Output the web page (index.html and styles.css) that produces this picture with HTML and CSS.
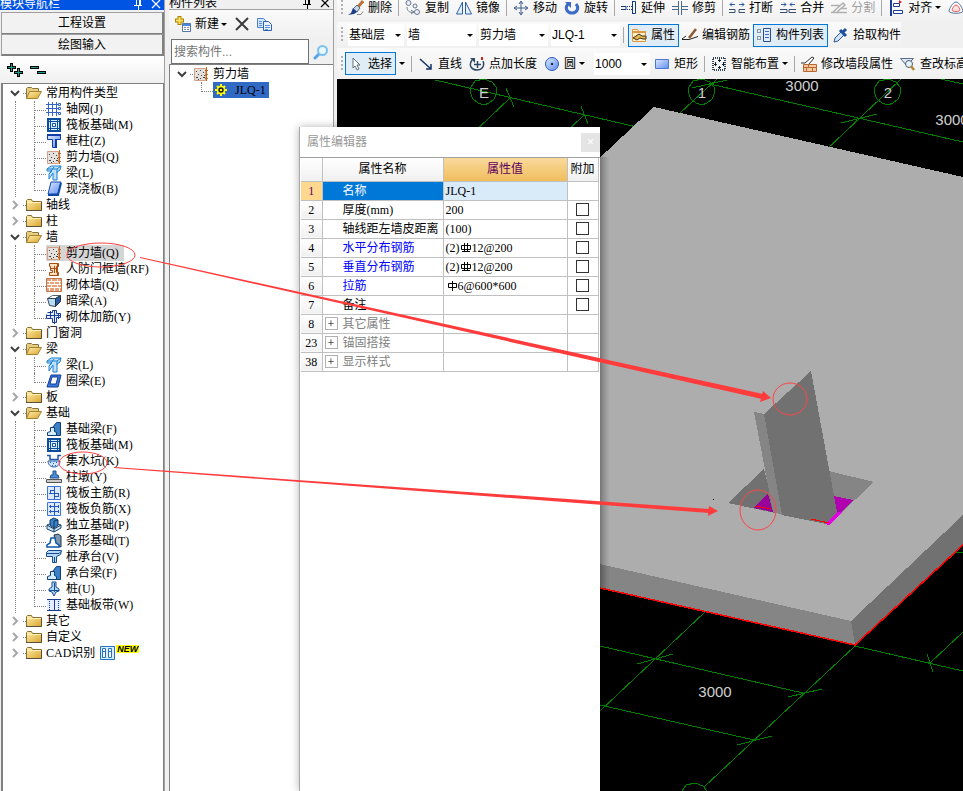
FILE: index.html
```html
<!DOCTYPE html>
<html lang="zh-CN">
<head>
    <meta charset="UTF-8">
    <meta name="viewport" content="width=device-width, initial-scale=1.0">
    <title>模块导航栏</title>
    <link rel="stylesheet" href="styles.css">
</head>
<body>
    <svg class="defs" aria-hidden="true">
        <defs>
            <linearGradient id="gold" x1="0" y1="0" x2="1" y2="1"><stop offset="0" stop-color="#fff0b0"/><stop offset="1" stop-color="#d9a52c"/></linearGradient>
            <linearGradient id="blue" x1="0" y1="0" x2="1" y2="1"><stop offset="0" stop-color="#dce9ff"/><stop offset="1" stop-color="#5f8df0"/></linearGradient>
            <linearGradient id="edge" x1="0" y1="0" x2="1" y2="0"><stop offset="0" stop-color="#000" stop-opacity=".2"/><stop offset="1" stop-color="#000" stop-opacity="0"/></linearGradient>
        </defs>
        <!-- tree -->
        <symbol id="down" viewBox="0 0 16 16"><path d="M4 6l4 4 4-4" fill="none" stroke="#404040" stroke-width="2"/></symbol>
        <symbol id="right" viewBox="0 0 16 16"><path d="M6 4l4 4-4 4" fill="none" stroke="#a6a6a6" stroke-width="2"/></symbol>
        <symbol id="folder" viewBox="0 0 16 16"><path d="M0.500 13.500V3.500l1-1h4l1 2h9v9z" fill="url(#gold)" stroke="#8a7030"/><path d="M1 5.500h14" stroke="#fff0b8"/><path d="M0 13.500h15.500V5" fill="none" stroke="#5a5040"/></symbol>
        <symbol id="open" viewBox="0 0 16 16"><path d="M0.500 13.500V3.500l1-1h4l1 1h6v3" fill="#e8cf80" stroke="#8a7540"/><path d="M0.500 13.500l3-7h12l-4 7z" fill="url(#gold)" stroke="#a8802c"/></symbol>
        <symbol id="grid" viewBox="0 0 16 16"><path d="M2.500 1v14M6.500 1v14M10.500 1v14M0 3.500h13M0 7.500h13M0 11.500h13" stroke="#3565c8"/><path d="M12.500 2.500h2v2h-2zM12.500 6.500h2v2h-2zM12.500 11.500h2v2h-2z" fill="#fff" stroke="#3565c8"/></symbol>
        <symbol id="raft" viewBox="0 0 16 16"><path d="M2 2h12v12H2z" fill="#d8ecff" stroke="#0c4e9c" stroke-width="2"/><path d="M4.500 1v14M11.500 1v14M1 4.500h14M1 11.500h14" stroke="#0c4e9c"/><path d="M6.500 6.500h3v3h-3z" fill="#fff" stroke="#0c4e9c"/></symbol>
        <symbol id="column" viewBox="0 0 16 16"><path d="M1.500 2.500h13v4h-4v8h-4v-8h-5z" fill="url(#blue)" stroke="#103ca8"/><path d="M1 2h14M10 6v9" stroke="#103ca8" stroke-width="2"/></symbol>
        <symbol id="wall" viewBox="0 0 16 16"><path d="M1.500 2.500h11v12h-11z" fill="#e4e0dc" stroke="#d6a088"/><path d="M3 5.500h1M7 4.500h1M10 6.500h1M5 8.500h1M8 9.500h1M3 11.500h2M7 12.500h1M10 11.500h2M11 9.500h1M5 13.500h1" stroke="#444"/><path d="M13.500 1v14M12 4.500h3M12 8.500h3M12 12.500h3" stroke="#c06820"/></symbol>
        <symbol id="beam" viewBox="0 0 16 16"><path d="M1 4l4-3h10l-1 4-3 2v8H7V8l-4 6V9l3-3H1z" fill="#bfe0fa" stroke="#1c80d0"/><path d="M1 4h10l4-3M11 4v4M3 9l5-7" fill="none" stroke="#1c80d0"/></symbol>
        <symbol id="slab" viewBox="0 0 16 16"><path d="M5 1h10l-3 12H2z" fill="url(#blue)" stroke="#1048a8"/><path d="M2 14h10l3-12" fill="none" stroke="#1048a8" stroke-width="2"/></symbol>
        <symbol id="frame" viewBox="0 0 16 16"><path d="M3.500 2.500h9v3h-2v6h2v3h-9v-3h3v-2h-2v-4h-1z" fill="#fce0c0" stroke="#a84c10"/><path d="M8.500 5v7M4 7.500h7M11.500 3v11" stroke="#a84c10"/></symbol>
        <symbol id="brick" viewBox="0 0 16 16"><path d="M1 1h14v14H1z" fill="#e8a078"/><path d="M1 4.500h14M1 7.500h14M1 10.500h14M5.500 2v3M11.500 2v3M3.500 5v3M8.500 5v3M13.500 5v3M5.500 8v3M11.500 8v3M3.500 11v3M8.500 11v3M13.500 11v3" stroke="#fff"/><path d="M0.500 1.500h15v13H.5z" fill="none" stroke="#c07448"/></symbol>
        <symbol id="hidden" viewBox="0 0 16 16"><path d="M1.500 5.500l5-3h8l-5 3z" fill="#fff" stroke="#5a6470"/><path d="M1.500 5.500h8v8l-6-1z" fill="#b8dcf4" stroke="#345"/><path d="M9.500 5.500l5-3v6l-5 5z" fill="#2c5c9c" stroke="#234"/></symbol>
        <symbol id="rebar" viewBox="0 0 16 16"><path d="M1.500 3.500h5v-2h4v3h4v4h-4v5h-4v-4h-6v-4" fill="#e4eeff" stroke="#183c98"/><path d="M1 6.500h14M4.500 2v8M8.500 2v13M12.500 4v6" stroke="#183c98"/></symbol>
        <symbol id="ring" viewBox="0 0 16 16"><path d="M5 2h10l-3 12H1z" fill="#3c78dc" stroke="#103c98"/><path d="M6 4h6l-2 7H4z" fill="#fff" stroke="#103c98"/></symbol>
        <symbol id="strip" viewBox="0 0 16 16"><path d="M6.500 6.500l4-5h4v13h-5z" fill="#3a80c4" stroke="#103c78"/><path d="M1.500 14.500v-3l3-1v-4h4v4l2 1v3z" fill="#d0ecff" stroke="#103c78"/></symbol>
        <symbol id="trap" viewBox="0 0 16 16"><path d="M8 2l4-1 3 2v11l-5-2z" fill="#7c98b0" stroke="#234"/><path d="M1 14v-2l3-2 1-5h4l1 5 3 2v2z" fill="#fff" stroke="#0c58a8" stroke-width="1.500"/></symbol>
        <symbol id="sump" viewBox="0 0 16 16"><path d="M2 8h12c0 8-12 8-12 0z" fill="#cfe4ff" stroke="#2458a8"/><path d="M1 2.500h3v4h8v-4h3" fill="none" stroke="#2458a8" stroke-width="1.500"/><path d="M4 9.500h1M7 10.500h1M10 9.500h1M6 12.500h1M9 12.500h1" stroke="#2458a8"/></symbol>
        <symbol id="pier" viewBox="0 0 16 16"><path d="M7 2h3v4h2l1 3H4l1-3h2z" fill="#4c90dc" stroke="#204c90"/><path d="M0.500 10.500h15v3H.5z" fill="#ccc" stroke="#555"/></symbol>
        <symbol id="main" viewBox="0 0 16 16"><path d="M1.500 1.500h13v13h-13z" fill="#dceaff" stroke="#3c74d4"/><path d="M3 8.500h10M8.500 2v12M4.500 5v4M12.500 8v4M4 5.500h4M9 11.500h4" stroke="#2458c0" fill="none"/></symbol>
        <symbol id="neg" viewBox="0 0 16 16"><path d="M1.500 1.500h13v13h-13z" fill="#dceaff" stroke="#3c74d4"/><path d="M3 5.500h10M3 10.500h10M8.500 2v12M4.500 4v3M12.500 9v3M4.500 9v3M12.500 4v3" stroke="#2458c0"/></symbol>
        <symbol id="iso" viewBox="0 0 16 16"><path d="M1 8l5-2 9 2v3l-7 4-7-3z" fill="#c8e0f4" stroke="#204870"/><path d="M4 3l4-2 4 2v5L8 11 4 8z" fill="#3c80c8" stroke="#103860"/><path d="M8 11V4l4-1M1 8l7 4 7-4M8 12v3" fill="none" stroke="#103860"/></symbol>
        <symbol id="cap" viewBox="0 0 16 16"><path d="M0.500 3.500l2-2h13l-1 4-4 2v6h-4v-6h-6z" fill="#b4d8f8" stroke="#184c88"/><path d="M1 4.500h12l2-2M8.500 8v6" stroke="#184c88" fill="none"/></symbol>
        <symbol id="pile" viewBox="0 0 16 16"><path d="M6 1h4v5l3 2v2l-3 1-2 4-2-4-3-1V8l3-2z" fill="#b4d8f8" stroke="#184c98"/><path d="M8.500 2v9M3 9.500h10" stroke="#184c98"/></symbol>
        <symbol id="band" viewBox="0 0 16 16"><path d="M1 3h14v10H1z" fill="#e4eeff"/><path d="M1 2.500h14M1 13.500h14M8.500 3v10" stroke="#1c3c90"/><path d="M3.500 4v9M12.500 4v9" stroke="#1c3c90" stroke-dasharray="1 1"/></symbol>
        <symbol id="cad" viewBox="0 0 16 16"><path d="M1.500 1.500h14v13h-14z" fill="#d8eeff" stroke="#2474c4"/><path d="M3.500 3.500h3v9h-3zM9.500 3.500h3v9h-3zM3 6.500h4M9 6.500h4" fill="#fff" stroke="#2474c4"/></symbol>
        <symbol id="gear" viewBox="0 0 16 16"><path d="M8 2v12M2 8h12M4 4l8 8M12 4l-8 8" stroke="#ff0" stroke-width="2"/><circle cx="8" cy="8" r="3.500" fill="#222" stroke="#ff0" stroke-width="1.500"/><path d="M7 7h2v2H7z" fill="#ff0"/></symbol>
        <!-- tools -->
        <symbol id="plus" viewBox="0 0 16 16"><path d="M4.500 1v9M0 5.500h9M11.500 6v9M7 10.500h9" stroke="#000" stroke-width="3"/><path d="M4.500 2v7M1 5.500h7M11.500 7v7M8 10.500h7" stroke="#1c9c8c"/></symbol>
        <symbol id="minus" viewBox="0 0 16 16"><path d="M0 5.500h9M7 10.500h9" stroke="#000" stroke-width="3"/><path d="M1 5.500h7M8 10.500h7" stroke="#1c9c8c"/></symbol>
        <symbol id="pin" viewBox="0 0 16 16"><path d="M5 3.500h6M6.500 4v5M9.500 4v5M10.500 4v5M4 9.500h8M8.500 10v4" stroke="currentColor" fill="none"/></symbol>
        <symbol id="close" viewBox="0 0 16 16"><path d="M4 4l8 8M12 4l-8 8" stroke="currentColor" stroke-width="1.200"/></symbol>
        <symbol id="new" viewBox="0 0 16 16"><path d="M4.500 0v9M0 4.500h9" stroke="#a88400" stroke-width="4"/><path d="M4.500 1v7M1 4.500h7" stroke="#ffe060" stroke-width="2"/><path d="M7.500 7.500h8v8h-8z" fill="#fff" stroke="#5078a8"/><path d="M8 9h7" stroke="#4888e0" stroke-width="2"/><path d="M9 11.500h2M12 11.500h2M9 13.500h2M12 13.500h2" stroke="#88a"/></symbol>
        <symbol id="cross" viewBox="0 0 16 16"><path d="M2 2l12 12M14 2L2 14" stroke="#3c3c3c" stroke-width="2"/></symbol>
        <symbol id="pages" viewBox="0 0 16 16"><path d="M0.500 2.500h6l3 3v6h-9z" fill="#d4e6ff" stroke="#4c80cc"/><path d="M6.500 5.500h5l3 3v6h-8z" fill="#e8f2ff" stroke="#2c60b4"/><path d="M2 5.500h3M2 7.500h3M2 9.500h3M8 9.500h5M8 11.500h5M8 13.500h3" stroke="#5c90dc"/></symbol>
        <symbol id="search" viewBox="0 0 16 16"><path d="M6 10l-4 4" stroke="#58a4ec" stroke-width="3" stroke-linecap="round"/><circle cx="9.500" cy="6.500" r="4.500" fill="#e8f8ff" stroke="#7cc0f0" stroke-width="2"/></symbol>
        <symbol id="brush" viewBox="0 0 16 16"><path d="M15 1l-5 6" stroke="#c0703c" stroke-width="3"/><path d="M9 5l3 3-3 4-4-3z" fill="#c8d4e8" stroke="#567"/><path d="M5 8l4 4-3 2-6 1 3-2z" fill="#1c3c88"/><path d="M9 14.500h4l2-3" stroke="#888" fill="none"/></symbol>
        <symbol id="copy" viewBox="0 0 16 16"><circle cx="3.500" cy="3" r="2.500" fill="#eef" stroke="#68788c"/><circle cx="10" cy="6" r="2" fill="#eef" stroke="#68788c"/><circle cx="12" cy="12" r="2.500" fill="#eef" stroke="#68788c"/><path d="M2 7c0 4 3 6 6 5M6 10l3 2-3 2" fill="none" stroke="#68788c"/></symbol>
        <symbol id="mirror" viewBox="0 0 16 16"><path d="M6.500 2v12h-6zM9.500 2v12h6z" fill="#e4f0ff" stroke="#2c5cac"/></symbol>
        <symbol id="move" viewBox="0 0 16 16"><path d="M8 2v12M2 8h12M6 4l2-3 2 3M6 12l2 3 2-3M4 6L1 8l3 2M12 6l3 2-3 2" fill="none" stroke="#3c5c88"/></symbol>
        <symbol id="rotate" viewBox="0 0 16 16"><path d="M4 4c-4 5 0 9 4 9s8-4 4-9" fill="none" stroke="#3c6cc8" stroke-width="3"/><path d="M1 2h6v6z" fill="#3c6cc8"/></symbol>
        <symbol id="extend" viewBox="0 0 16 16"><path d="M0 6.500h5v3H0M11 1.500h3.500v12H11M11.500 2v12" stroke="#183c80" fill="none"/><path d="M6 6.500h5M6 9.500h5" stroke="#183c80" stroke-dasharray="1 1"/></symbol>
        <symbol id="trim" viewBox="0 0 16 16"><path d="M6.500 1v14M9.500 1v14M0 6.500h6M0 9.500h6M10 6.500h6M10 9.500h6" stroke="#486890" fill="none"/></symbol>
        <symbol id="break" viewBox="0 0 16 16"><path d="M6 4.500H1l2-2M1 4.500l2 2M10 4.500h5l-2-2M15 4.500l-2 2" fill="none" stroke="#2c58a4"/><path d="M0 9.500h6v3H0M16 9.500h-6v3h6" fill="none" stroke="#38506c"/></symbol>
        <symbol id="merge" viewBox="0 0 16 16"><path d="M1 4.500h5l-2-2M6 4.500l-2 2M15 4.500h-5l2-2M10 4.500l2 2" fill="none" stroke="#2c58a4"/><path d="M0 9.500h7v3H0M16 9.500H9v3h7" fill="none" stroke="#38506c"/></symbol>
        <symbol id="split" viewBox="0 0 16 16"><path d="M0 5.500h9M0 12.500h16M2 12l10-9 2 2-8 7M10 8.500h6" fill="none" stroke="#b0b0b0" stroke-width="1.500"/></symbol>
        <symbol id="align" viewBox="0 0 16 16"><path d="M3 0v16" stroke="#1c3c98" stroke-width="2"/><path d="M5.500 3.500h6v3h-6zM5.500 10.500h9v3h-9z" fill="#fff" stroke="#1c3c98"/><path d="M11 0l3 2-3 2" fill="#c22"/></symbol>
        <symbol id="tri" viewBox="0 0 16 16"><path d="M8 2c3 0 7 7 7 9 0 3-14 3-14 0 0-2 4-9 7-9z" fill="#fff" stroke="#507098"/><path d="M8 5c2 0 4 4 4 5 0 2-8 2-8 0 0-1 2-5 4-5z" fill="#ffe0e0" stroke="#e05c5c"/></symbol>
        <symbol id="props" viewBox="0 0 16 16"><path d="M1.500 2.500h5l1 2h7v10h-13z" fill="#fff2d0" stroke="#e09840"/><path d="M1 5h14" stroke="#e09840" stroke-width="2"/><path d="M2 11l6-4 3 2h4v3h-3l-3-1-3 2z" fill="#e0b850" stroke="#403018"/></symbol>
        <symbol id="edit" viewBox="0 0 16 16"><path d="M0 12.500h7l9-3M0 12l4-3" fill="none" stroke="#222"/><path d="M14 2L7 11" stroke="#905830" stroke-width="2.500"/></symbol>
        <symbol id="list" viewBox="0 0 16 16"><path d="M7.500 1.500h7v13h-7z" fill="#e0ecff" stroke="#2c4c88"/><path d="M9 4.500h4M9 7.500h4M9 10.500h4" stroke="#3c6cc0"/><path d="M1.500 2.500h3v3h-3zM1.500 9.500h3v3h-3z" fill="none" stroke="#345" stroke-dasharray="1 1"/></symbol>
        <symbol id="pick" viewBox="0 0 16 16"><path d="M1 15l1-4 6-6 3 3-6 6z" fill="#cfe4ff" stroke="#305888"/><path d="M7 3l6 6M9 6l4-4" stroke="#1c50a0" stroke-width="3"/></symbol>
        <symbol id="cursor" viewBox="0 0 16 16"><path d="M5 2v10l2-2 2 4 2-1-2-4h3z" fill="#fff" stroke="#607080"/></symbol>
        <symbol id="line" viewBox="0 0 16 16"><path d="M2 3l11 10M13 8v5H8" fill="none" stroke="#183468" stroke-width="1.500"/></symbol>
        <symbol id="length" viewBox="0 0 16 16"><path d="M3 4c-4 6 0 10 5 10s8-4 6-9M8.500 5v7M5 8.500h7" fill="none" stroke="#304868" stroke-width="1.500"/><path d="M1 2h5v5z" fill="#304868"/><path d="M13 1v3" stroke="#c22" stroke-width="2"/></symbol>
        <symbol id="circle" viewBox="0 0 16 16"><circle cx="8" cy="8" r="6.500" fill="url(#blue)" stroke="#2c58b8"/><path d="M7 7h2v2H7z" fill="#123"/></symbol>
        <symbol id="rect" viewBox="0 0 16 16"><path d="M1.500 3.500h13v9h-13z" fill="url(#blue)" stroke="#4c78d0"/></symbol>
        <symbol id="smart" viewBox="0 0 16 16"><path d="M2 2h12v12H2z" fill="none" stroke="#345" stroke-width="2" stroke-dasharray="1 1"/><path d="M8.500 3v3M7 4.500h3M8.500 10v3M7 11.500h3M4.500 6v4M3 8.500h3M12.500 6v4M11 8.500h3" stroke="#123"/></symbol>
        <symbol id="modify" viewBox="0 0 16 16"><path d="M2.500 8.500h13v7h-13z" fill="#f4c8a0" stroke="#b86830"/><path d="M2 11.500h13M7.500 8v3M11.500 11v4M5.500 11v4" stroke="#b86830"/><path d="M0 7h4l7-6 2 1-5 6" fill="#fff" stroke="#333"/></symbol>
        <symbol id="level" viewBox="0 0 16 16"><path d="M0.500 2.500h13l-3 3-4 4z" fill="#dce6f4" stroke="#58708c"/><circle cx="9" cy="8" r="3.500" fill="#e4f4ff" stroke="#506070"/><path d="M11 10l3 4" stroke="#b88830" stroke-width="2.500"/></symbol>
        <symbol id="hrb" viewBox="0 0 12 12"><path d="M1.500 3.500h9v4h-9zM4.500 1v9M7.500 1v9M2 9.500h8" fill="none" stroke="#000"/></symbol>
        <symbol id="hpb" viewBox="0 0 12 12"><path d="M2.500 3.500h8v4h-8zM6.500 1v10" fill="none" stroke="#000"/></symbol>
    </svg>

    <aside class="nav">
        <div class="title active"><span>模块导航栏</span><svg><use href="#pin"/></svg><svg><use href="#close"/></svg></div>
        <button class="tab">工程设置</button>
        <button class="tab">绘图输入</button>
        <div class="nav-tools">
            <button aria-label="展开"><svg><use href="#plus"/></svg></button>
            <button aria-label="折叠"><svg><use href="#minus"/></svg></button>
        </div>
        <ul class="tree">
            <li><div class="row"><button><svg><use href="#down"/></svg></button><a href="#"><svg><use href="#open"/></svg>常用构件类型</a></div>
                <ul>
                    <li><a href="#"><svg><use href="#grid"/></svg>轴网(J)</a></li>
                    <li><a href="#"><svg><use href="#raft"/></svg>筏板基础(M)</a></li>
                    <li><a href="#"><svg><use href="#column"/></svg>框柱(Z)</a></li>
                    <li><a href="#"><svg><use href="#wall"/></svg>剪力墙(Q)</a></li>
                    <li><a href="#"><svg><use href="#beam"/></svg>梁(L)</a></li>
                    <li><a href="#"><svg><use href="#slab"/></svg>现浇板(B)</a></li>
                </ul>
            </li>
            <li><div class="row"><button><svg><use href="#right"/></svg></button><a href="#"><svg><use href="#folder"/></svg>轴线</a></div></li>
            <li><div class="row"><button><svg><use href="#right"/></svg></button><a href="#"><svg><use href="#folder"/></svg>柱</a></div></li>
            <li><div class="row"><button><svg><use href="#down"/></svg></button><a href="#"><svg><use href="#open"/></svg>墙</a></div>
                <ul>
                    <li><a href="#" class="current"><svg><use href="#wall"/></svg>剪力墙(Q)</a></li>
                    <li><a href="#"><svg><use href="#frame"/></svg>人防门框墙(RF)</a></li>
                    <li><a href="#"><svg><use href="#brick"/></svg>砌体墙(Q)</a></li>
                    <li><a href="#"><svg><use href="#hidden"/></svg>暗梁(A)</a></li>
                    <li><a href="#"><svg><use href="#rebar"/></svg>砌体加筋(Y)</a></li>
                </ul>
            </li>
            <li><div class="row"><button><svg><use href="#right"/></svg></button><a href="#"><svg><use href="#folder"/></svg>门窗洞</a></div></li>
            <li><div class="row"><button><svg><use href="#down"/></svg></button><a href="#"><svg><use href="#open"/></svg>梁</a></div>
                <ul>
                    <li><a href="#"><svg><use href="#beam"/></svg>梁(L)</a></li>
                    <li><a href="#"><svg><use href="#ring"/></svg>圈梁(E)</a></li>
                </ul>
            </li>
            <li><div class="row"><button><svg><use href="#right"/></svg></button><a href="#"><svg><use href="#folder"/></svg>板</a></div></li>
            <li><div class="row"><button><svg><use href="#down"/></svg></button><a href="#"><svg><use href="#open"/></svg>基础</a></div>
                <ul>
                    <li><a href="#"><svg><use href="#strip"/></svg>基础梁(F)</a></li>
                    <li><a href="#"><svg><use href="#raft"/></svg>筏板基础(M)</a></li>
                    <li><a href="#"><svg><use href="#sump"/></svg>集水坑(K)</a></li>
                    <li><a href="#"><svg><use href="#pier"/></svg>柱墩(Y)</a></li>
                    <li><a href="#"><svg><use href="#main"/></svg>筏板主筋(R)</a></li>
                    <li><a href="#"><svg><use href="#neg"/></svg>筏板负筋(X)</a></li>
                    <li><a href="#"><svg><use href="#iso"/></svg>独立基础(P)</a></li>
                    <li><a href="#"><svg><use href="#trap"/></svg>条形基础(T)</a></li>
                    <li><a href="#"><svg><use href="#cap"/></svg>桩承台(V)</a></li>
                    <li><a href="#"><svg><use href="#strip"/></svg>承台梁(F)</a></li>
                    <li><a href="#"><svg><use href="#pile"/></svg>桩(U)</a></li>
                    <li><a href="#"><svg><use href="#band"/></svg>基础板带(W)</a></li>
                </ul>
            </li>
            <li><div class="row"><button><svg><use href="#right"/></svg></button><a href="#"><svg><use href="#folder"/></svg>其它</a></div></li>
            <li><div class="row"><button><svg><use href="#right"/></svg></button><a href="#"><svg><use href="#folder"/></svg>自定义</a></div></li>
            <li><div class="row"><button><svg><use href="#right"/></svg></button><a href="#"><svg><use href="#folder"/></svg>CAD识别<svg><use href="#cad"/></svg><b class="new">NEW</b></a></div></li>
        </ul>
    </aside>

    <aside class="parts">
        <div class="title"><span>构件列表</span><svg><use href="#pin"/></svg><svg><use href="#close"/></svg></div>
        <div class="parts-tools">
            <button><svg><use href="#new"/></svg>新建<i class="caret"></i></button>
            <button aria-label="删除"><svg><use href="#cross"/></svg></button>
            <button aria-label="复制"><svg><use href="#pages"/></svg></button>
        </div>
        <div class="search">
            <input type="text" placeholder="搜索构件..." aria-label="搜索构件">
            <button aria-label="搜索"><svg><use href="#search"/></svg></button>
        </div>
        <ul class="tree">
            <li><div class="row"><button><svg><use href="#down"/></svg></button><a href="#"><svg><use href="#wall"/></svg>剪力墙</a></div>
                <ul>
                    <li><a href="#" class="selected"><svg><use href="#gear"/></svg>JLQ-1</a></li>
                </ul>
            </li>
        </ul>
    </aside>

    <main>
        <div class="toolbars">
            <div class="bar bar-edit">
                <button><svg><use href="#brush"/></svg>删除</button><hr>
                <button><svg><use href="#copy"/></svg>复制</button>
                <button><svg><use href="#mirror"/></svg>镜像</button><hr>
                <button><svg><use href="#move"/></svg>移动</button>
                <button><svg><use href="#rotate"/></svg>旋转</button><hr>
                <button><svg><use href="#extend"/></svg>延伸</button>
                <button><svg><use href="#trim"/></svg>修剪</button><hr>
                <button><svg><use href="#break"/></svg>打断</button>
                <button><svg><use href="#merge"/></svg>合并</button>
                <button disabled><svg><use href="#split"/></svg>分割</button><hr>
                <button><svg><use href="#align"/></svg>对齐<i class="caret"></i></button>
                <button aria-label="偏移"><svg><use href="#tri"/></svg></button>
            </div>
            <div class="bar bar-part">
                <span class="combo short"><select aria-label="楼层"><option>基础层</option></select></span>
                <span class="combo"><select aria-label="类型"><option>墙</option></select></span>
                <span class="combo"><select aria-label="构件类型"><option>剪力墙</option></select></span>
                <span class="combo"><select aria-label="构件"><option>JLQ-1</option></select></span>
                <hr>
                <button class="on"><svg><use href="#props"/></svg>属性</button>
                <button><svg><use href="#edit"/></svg>编辑钢筋</button>
                <button class="on"><svg><use href="#list"/></svg>构件列表</button>
                <button><svg><use href="#pick"/></svg>拾取构件</button>
            </div>
            <div class="bar bar-draw">
                <button class="on"><svg><use href="#cursor"/></svg>选择</button><i class="caret"></i><hr>
                <button><svg><use href="#line"/></svg>直线</button>
                <button><svg><use href="#length"/></svg>点加长度</button>
                <button><svg><use href="#circle"/></svg>圆<i class="caret"></i></button>
                <span class="combo short"><select aria-label="半径"><option>1000</option></select></span>
                <button><svg><use href="#rect"/></svg>矩形</button><hr>
                <button><svg><use href="#smart"/></svg>智能布置<i class="caret"></i></button><hr>
                <button><svg><use href="#modify"/></svg>修改墙段属性</button>
                <button><svg><use href="#level"/></svg>查改标高</button>
            </div>
        </div>
        <svg class="scene" role="img" aria-label="三维视图">
            <g transform="translate(-337 -79)" shape-rendering="crispEdges">
                <!-- axis grid -->
                <g fill="none" stroke="#008000">
                    <path d="M435 80L654 131M510 98L470 136M506 88l8 19M584 115L560 138M581 106l7 18"/>
                    <path d="M717 79L680 113M692 88L727 80M710 84L963 142M841 123L877 114M901 79L825 151M941 79L963 84"/>
                    <path d="M600 646L803 693M637 664l36-10M788 697l34-8M600 705L754 740M737 745l35-9M705 612L600 711M855 646L704 787M855 646L963 671M927 654l6 18M930 663L963 632M956 552l7 1"/>
                    <path id="axis" d="M484 79l8 3 4 5 1 5-3 7-5 4-5 2-6-2-5-4-3-7 1-5 4-6z"/>
                    <use href="#axis" x="218"/>
                    <use href="#axis" x="404"/>
                    <use href="#axis" x="211" y="704"/>
                </g>
                <!-- slab -->
                <path d="M654 107L963 177V515L851 621L560 556V195z" fill="#adadad"/>
                <path d="M560 555L851 621L855 645L560 579z" fill="#858585"/>
                <path d="M851 621L963 515V545L855 645z" fill="#717171"/>
                <path d="M600 588L855 645L963 545" fill="none" stroke="red" stroke-width="1.500"/>
                <!-- pit and wall -->
                <path d="M728 503L764 469L775 513z" fill="#717171"/>
                <path d="M829 471L874 482L837 517z" fill="#858585"/>
                <path d="M753 508L768 494L773 512z" fill="#990099"/>
                <path d="M834 496L853 500L828 525z" fill="#b000b0"/>
                <path d="M838 512h4L829 525l-5-1z" fill="#e600e6"/>
                <path d="M754 412L764 414L783 515L773 512z" fill="#858585"/>
                <path d="M764 414L811 371L837 512L826 524L782 515z" fill="#717171"/>
                <path d="M755 506L771 509M811 519l18 4" stroke="red"/>
                <path d="M713 499h1v1h-1z" fill="#000"/>
                <path d="M600 157h10V590L600 588z" fill="url(#edge)"/>
            </g>
            <g class="dims" transform="translate(-337 -79)">
                <text x="484" y="98">E</text>
                <text x="702" y="98">1</text>
                <text x="888" y="98">2</text>
                <text x="802" y="91">3000</text>
                <text x="952" y="125">3000</text>
                <text x="715" y="697">3000</text>
            </g>
        </svg>
    </main>

    <section class="editor">
        <div class="editor-title">属性编辑器<button aria-label="关闭">×</button></div>
        <table>
            <colgroup><col class="c-no"><col class="c-name"><col class="c-value"><col class="c-add"></colgroup>
            <thead>
                <tr><th></th><th>属性名称</th><th class="hot">属性值</th><th>附加</th></tr>
            </thead>
            <tbody>
                <tr class="picked"><th>1</th><td>名称</td><td>JLQ-1</td><td></td></tr>
                <tr><th>2</th><td>厚度(mm)</td><td>200</td><td><input type="checkbox" aria-label="厚度"></td></tr>
                <tr><th>3</th><td>轴线距左墙皮距离</td><td>(100)</td><td><input type="checkbox" aria-label="轴线距左墙皮距离"></td></tr>
                <tr class="key"><th>4</th><td>水平分布钢筋</td><td>(2)<svg><use href="#hrb"/></svg>12@200</td><td><input type="checkbox" aria-label="水平分布钢筋"></td></tr>
                <tr class="key"><th>5</th><td>垂直分布钢筋</td><td>(2)<svg><use href="#hrb"/></svg>12@200</td><td><input type="checkbox" aria-label="垂直分布钢筋"></td></tr>
                <tr class="key"><th>6</th><td>拉筋</td><td><svg><use href="#hpb"/></svg>6@600*600</td><td><input type="checkbox" aria-label="拉筋"></td></tr>
                <tr><th>7</th><td>备注</td><td></td><td><input type="checkbox" aria-label="备注"></td></tr>
                <tr class="group"><th>8</th><td><button>+</button>其它属性</td><td></td><td></td></tr>
                <tr class="group"><th>23</th><td><button>+</button>锚固搭接</td><td></td><td></td></tr>
                <tr class="group"><th>38</th><td><button>+</button>显示样式</td><td></td><td></td></tr>
            </tbody>
        </table>
    </section>

    <!-- red callouts -->
    <svg class="marks" aria-hidden="true">
        <g fill="none" stroke="#f44">
            <ellipse cx="101" cy="255" rx="34" ry="12"/>
            <ellipse cx="83" cy="463" rx="24" ry="11"/>
            <ellipse cx="790" cy="399" rx="17" ry="16"/>
            <ellipse cx="758" cy="510" rx="18" ry="20"/>
        </g>
        <g fill="#ff3b3b">
            <path d="M140 257L763 394L762 399L140 258z"/>
            <path d="M763 391L771 398L760 402z"/>
            <path d="M114 467L709 509V513L114 468z"/>
            <path d="M709 506L718 511L708 516z"/>
        </g>
    </svg>
</body>
</html>
```

FILE: styles.css
```css
* {
    box-sizing: border-box;
}
body {
    margin: 0;
    height: 100vh;
    display: flex;
    position: relative;
    overflow: hidden;
    background: #f0f0f0;
    color: #000;
    font-family: "Liberation Sans", "Noto Sans CJK SC", sans-serif;
    font-size: 12px;
    line-height: 16px;
}
svg {
    width: 16px;
    height: 16px;
    flex: none;
}
.defs {
    position: absolute;
    width: 0;
    height: 0;
}
button, input, select {
    font: inherit;
    color: inherit;
    margin: 0;
    padding: 0;
    border: 0;
    background: none;
}
button {
    display: flex;
    align-items: center;
    white-space: nowrap;
}
a {
    color: inherit;
    text-decoration: none;
}
ul {
    list-style: none;
    margin: 0;
    padding: 0;
}
.caret {
    width: 0;
    border: 3px solid transparent;
    border-top-color: #000;
    border-bottom: 0;
}

/* side panels */
.nav, .parts {
    flex: none;
    display: flex;
    flex-direction: column;
}
.nav {
    width: 165px;
    margin-right: 4px;
    border-right: 1px solid #a0a0a0;
}
.parts {
    width: 165px;
    margin-right: 3px;
    border-right: 1px solid #a0a0a0;
}
.title {
    flex: none;
    display: flex;
    align-items: center;
    gap: 2px;
    height: 10px;
    line-height: 6px;
    padding-bottom: 3px;
    border-bottom: 1px solid #a0a0a0;
}
.title span {
    flex: 1;
    white-space: nowrap;
}
.title.active {
    background: #0054e3;
    color: #fff;
    border: 0;
}
.tab {
    flex: none;
    height: 22px;
    margin-left: 1px;
    justify-content: center;
    border: 1px solid #a0a0a0;
    border-right: 2px solid #808080;
    border-bottom: 2px solid #808080;
    background: #f2f2f2;
}
.title + .tab {
    margin-top: 2px;
    border-bottom-width: 1px;
}
.nav-tools {
    flex: none;
    display: flex;
    gap: 7px;
    height: 27px;
    padding: 0 7px;
    background: linear-gradient(#fff, #f0f0f0);
}
.parts-tools {
    flex: none;
    display: flex;
    gap: 7px;
    height: 28px;
    padding: 0 6px;
    background: linear-gradient(#fafafa, #f0f0f0);
}
.parts-tools button {
    gap: 4px;
}
.parts-tools .caret {
    margin-left: -2px;
}
.search {
    flex: none;
    display: flex;
    height: 25px;
    margin: 1px 0 0 2px;
}
.search input {
    flex: 1;
    min-width: 0;
    padding: 0 2px;
    border: 1px solid #707070;
    background: #fff;
}
.search input::placeholder {
    color: #767676;
}
.search button {
    padding: 0 4px;
}

/* trees */
.tree {
    flex: 1;
    padding-top: 1px;
    border-top: 1px solid #808080;
    border-left: 2px solid #808080;
    background: #fff;
    white-space: nowrap;
    font-family: "Liberation Serif", "Noto Sans CJK SC", serif;
}
.nav .tree {
    margin-left: 1px;
    border-right: 1px solid #808080;
}
.parts .tree {
    border-left-width: 1px;
}
.row {
    display: flex;
    height: 16px;
    padding-left: 4px;
}
.row button::after {
    content: "";
    width: 3px;
    border-top: 1px dotted #808080;
}
.row a {
    display: flex;
    align-items: center;
    gap: 4px;
}
.tree ul {
    position: relative;
    margin-left: 31px;
}
.tree ul::before {
    content: "";
    position: absolute;
    left: -19px;
    top: 0;
    bottom: 0;
    border-left: 1px dotted #808080;
}
.parts .tree ul::before {
    border: 0;
}
.tree ul li {
    display: flex;
    position: relative;
    height: 16px;
}
.tree ul li::before {
    content: "";
    width: 11px;
    height: 9px;
    border-left: 1px dotted #808080;
    border-bottom: 1px dotted #808080;
}
.tree ul li:not(:last-child)::after {
    content: "";
    position: absolute;
    left: 0;
    top: 9px;
    height: 7px;
    border-left: 1px dotted #808080;
}
.tree ul a {
    display: flex;
    align-items: center;
    gap: 4px;
    padding-right: 5px;
}
.tree .current {
    background: #d4d4d4;
}
.tree .selected {
    gap: 6px;
    padding: 0 3px 0 0;
    background: #316ac5;
}
.new {
    align-self: flex-start;
    margin-left: -3px;
    padding: 0 1px;
    background: #ff0;
    font: italic bold 9px/8px "Liberation Sans", sans-serif;
}

/* toolbars */
main {
    flex: 1;
    min-width: 0;
    display: flex;
    flex-direction: column;
}
.toolbars {
    flex: none;
    overflow: hidden;
}
.bar {
    display: flex;
    align-items: center;
    width: max-content;
    padding-left: 8px;
    background: linear-gradient(#fafafa, #f0f0f0);
}
.bar::before {
    content: "";
    flex: none;
    width: 2px;
    height: 16px;
    margin-left: -4px;
    margin-right: 2px;
    background: repeating-linear-gradient(#b0b0b0 0 2px, transparent 2px 4px);
}
.bar hr {
    width: 2px;
    height: 16px;
    margin: 0 2px;
    border: 0;
    border-left: 1px solid #a8a8a8;
}
.bar button {
    gap: 4px;
    padding: 0 4px 0 3px;
}
.bar button .caret {
    margin-left: -1px;
}
.bar button:disabled {
    color: #a0a0a0;
}
.bar .on {
    height: 23px;
    padding: 0 3px 0 2px;
    border: 1px solid #0078d7;
    background: #e0ecf6;
}
.bar-edit {
    height: 22px;
    padding-bottom: 7px;
}
.bar-part {
    height: 26px;
    gap: 3px;
}
.bar-part hr {
    margin: 0;
}
.bar-part button:not(.on) {
    padding: 0;
}
.bar-part button:last-child {
    margin-left: 2px;
}
.bar-draw {
    height: 31px;
}
.bar-draw .on + .caret {
    margin: 0 4px 0 3px;
}
.bar-draw .combo {
    margin: 0 1px 0 5px;
}
.combo {
    position: relative;
    width: 69px;
    height: 22px;
    background: #fff;
}
.combo.short {
    width: 56px;
}
.combo select {
    width: 100%;
    height: 100%;
    padding-left: 1px;
    appearance: none;
}
.combo::after {
    content: "";
    position: absolute;
    right: 3px;
    top: 10px;
    border: 3px solid transparent;
    border-top-color: #000;
    border-bottom: 0;
}
.scene {
    flex: 1;
    width: 100%;
    min-height: 0;
    background: #000;
}
.dims {
    fill: #d0d0d0;
    font: 15px "Liberation Sans", sans-serif;
    text-anchor: middle;
}

/* property editor window */
.editor {
    position: absolute;
    left: 299px;
    top: 127px;
    bottom: 0;
    width: 301px;
    border-left: 1px solid #a8a8a8;
    background: #fff;
    box-shadow: 0 0 8px rgba(0, 0, 0, 0.3);
}
.editor-title {
    display: flex;
    justify-content: space-between;
    align-items: center;
    height: 31px;
    padding-left: 7px;
    border-bottom: 1px solid #a0a0a0;
    color: #999;
}
.editor-title button {
    width: 19px;
    height: 19px;
    justify-content: center;
    background: #e4e4e4;
    color: #fff;
}
.editor table {
    width: 297px;
    margin-left: 1px;
    table-layout: fixed;
    border-collapse: collapse;
    font-family: "Liberation Serif", "Noto Sans CJK SC", serif;
}
.c-no {
    width: 21px;
}
.c-name {
    width: 121px;
}
.c-value {
    width: 124px;
}
.c-add {
    width: 31px;
}
.editor tr {
    height: 19px;
}
.editor thead tr {
    height: 23px;
}
.editor th, .editor td {
    padding: 0;
    border: 1px solid #c0c0c0;
    border-top: 0;
    border-left: 0;
    line-height: 16px;
    white-space: nowrap;
}
.editor th {
    font-weight: normal;
    background: linear-gradient(#fff, #f0f0f0);
}
.editor th.hot {
    background: linear-gradient(#f9d99c, #f0bd5c);
    color: #600060;
}
.editor td:nth-child(2) {
    padding-left: 20px;
}
.editor td:nth-child(3) {
    padding-left: 2px;
}
.editor td svg {
    width: 12px;
    height: 12px;
    vertical-align: -2px;
}
.editor td input {
    display: block;
    width: 13px;
    height: 13px;
    margin: 0 auto;
    appearance: none;
    border: 1px solid #333;
    background: #fff;
}
.editor .picked th {
    background: #ffd890;
    color: #600060;
}
.editor .picked td:nth-child(2) {
    background: #0078d7;
    color: #fff;
}
.editor .picked td:nth-child(3) {
    background: #d9eaf8;
}
.editor .key td:nth-child(2) {
    color: #00f;
}
.editor .group td {
    color: #808080;
}
.editor .group td:nth-child(2) {
    padding-left: 2px;
}
.editor td button {
    display: inline-flex;
    justify-content: center;
    width: 13px;
    height: 13px;
    margin-right: 5px;
    border: 1px solid #b0b0b0;
    color: #000;
    line-height: 10px;
}

.marks {
    position: absolute;
    left: 0;
    top: 0;
    width: 100%;
    height: 100%;
    pointer-events: none;
}
```
